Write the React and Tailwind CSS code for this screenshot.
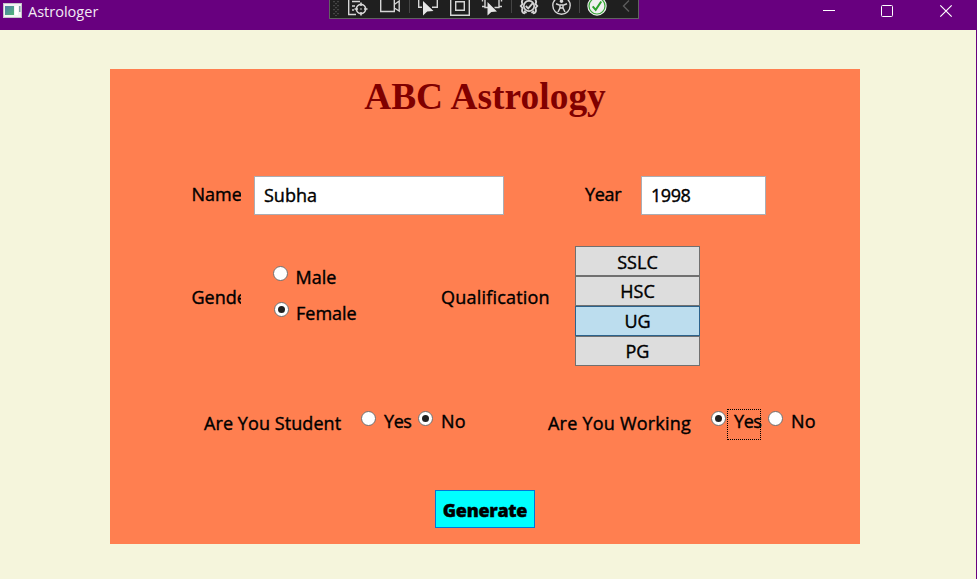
import React from "react";

function Radio({ checked = false, className = "" }) {
  return (
    <span className={`flex h-[15px] w-[15px] shrink-0 items-center justify-center rounded-full border border-[#707070] bg-white ${className}`}>
      {checked && <span className="h-[7px] w-[7px] rounded-full bg-[#212121]" />}
    </span>
  );
}

function Text({ children, className = "" }) {
  return <span className={`block shrink-0 whitespace-nowrap leading-6 ${className}`}>{children}</span>;
}

function DebugToolbar() {
  return (
    <div className="h-[19px] w-[310px] shrink-0 border border-t-0 border-[#626262] bg-[#1f1f1f]">
      <svg className="block" width="308" height="18" viewBox="330 0 308 18" fill="none" stroke="#d6d6d6" strokeWidth="1.4">
        <g stroke="#5a5a5a" strokeWidth="1.3" strokeDasharray="1.3 2.7">
          <path d="M334 1V17M338 1V17" />
          <path d="M336 3V16" />
        </g>
        <path d="M348.7 0V14.5H356M352 1.5H360M352 6H355M352 10H354" />
        <circle cx="361" cy="9" r="4.6" strokeWidth="1.7" />
        <path d="M361 2.5V6M361 12V15.5M354.5 9H358M364 9H367.5" strokeWidth="1.6" />
        <circle cx="361" cy="9" r="0.8" fill="#d6d6d6" stroke="none" />
        <path d="M380.7 0V11.5H394.3V0M394.3 4.5L399.2 1V11L394.3 8" />
        <path d="M409.5 0V13M511.5 0V13M579.5 0V13" stroke="#454545" strokeWidth="1" />
        <path d="M418.7 0V7.3H422M437.3 0V7.3H432" />
        <path d="M423 1V15.5L427.2 11.5L433.5 11Z" fill="#e6e6e6" stroke="none" />
        <path d="M450.7 0V15.3H469.3V0M455.7 1.7H464.3V10.3H455.7Z" />
        <path d="M482.5 0V1.5M485 0V7.5H488M482 6.5H485M499 0V7.5H494.5M501.5 0V1.5M499 6.5H502" />
        <path d="M487.5 2V15.5L491.3 12L497 11.5Z" fill="#e6e6e6" stroke="none" />
        <path d="M523 0Q521 1 522.5 4L520.8 6L522.5 8Q521 13 525 13.3M535 0Q537 1 535.5 4L537.2 6L535.5 8Q537 13 533 13.3" strokeWidth="1.9" />
        <circle cx="529" cy="6" r="5.2" strokeWidth="1.7" />
        <path d="M525.8 6L528.2 8.4L532.8 3.2M524 11L526.5 13M534 11L531.5 13" strokeWidth="1.8" />
        <circle cx="561.5" cy="5.5" r="8.7" />
        <circle cx="561.5" cy="1.2" r="1.7" fill="#d6d6d6" stroke="none" />
        <path d="M556 3.8L560 5.3V8L558 12M567 3.8L563 5.3V8L565 12M560 5H563M560.5 8H562.5" strokeWidth="1.5" />
        <circle cx="597" cy="6" r="9.7" fill="#f0f0f0" stroke="none" />
        <circle cx="597" cy="6" r="8" stroke="#36a536" strokeWidth="1.2" />
        <path d="M592.7 6.3L595.7 9.8L601.2 1.5" stroke="#2ca02c" strokeWidth="2" />
        <path d="M629 0.5L623.5 6L629 11.5" stroke="#5c5c5c" />
      </svg>
    </div>
  );
}

function TitleBar() {
  return (
    <header className="flex h-[30px] bg-[#68007f]">
      <div className="flex w-[329px] shrink-0 items-start pl-[3px] pt-[3px]">
        <svg width="19" height="16" viewBox="0 0 19 16" className="shrink-0">
          <defs>
            <linearGradient id="pane" x1="0" y1="0" x2="1" y2="1">
              <stop offset="0" stopColor="#4d7fa8" />
              <stop offset="1" stopColor="#52b577" />
            </linearGradient>
          </defs>
          <rect x="0.5" y="0.5" width="18" height="14" fill="#f3f3f3" stroke="#c5c5ca" />
          <rect x="2" y="3" width="9" height="9" fill="url(#pane)" />
          <rect x="12" y="3" width="3" height="9" fill="#fff" />
          <rect x="16" y="3" width="1.5" height="6" fill="#7fa3a6" />
        </svg>
        <span className="ml-[6px] text-[14.5px] leading-[18px] tracking-[0.01px] text-[#f2eaf4]">Astrologer</span>
      </div>
      <DebugToolbar />
      <svg className="ml-[183px] mt-[4px] block shrink-0" width="132" height="15" viewBox="822 4 132 15" fill="none" stroke="#fff">
        <path d="M823 10.5H835" />
        <rect x="881.5" y="5.5" width="11" height="11" rx="1" />
        <path d="M940.3 5.3L951.7 16.7M951.7 5.3L940.3 16.7" strokeWidth="1.2" />
      </svg>
    </header>
  );
}

function Level({ children, selected = false, className = "" }) {
  return (
    <div
      className={`flex h-[30px] items-center justify-center border ${className} ${
        selected ? "border-[#2c628b] bg-[#bcddee]" : "border-[#707070] bg-[#dddddd]"
      }`}
    >
      {children}
    </div>
  );
}

export default function App() {
  return (
    <div className="h-[579px] w-[977px] overflow-hidden bg-[#f5f5dc] font-['Open_Sans','Noto_Sans',sans-serif]">
      <TitleBar />
      <div className="h-[549px] border-r border-[#68007f] pl-[110px] pt-[39px]">
        <main className="flex h-[475px] w-[750px] flex-col bg-[#ff7f50] text-[18px] text-black [-webkit-text-stroke:0.4px_black]">
          <h1 className="h-[107px] pt-[6px] text-center font-['Liberation_Serif',serif] text-[37.33px] font-bold leading-[44px] tracking-[0.06px] text-[#800000] [-webkit-text-stroke:0px]">
            ABC Astrology
          </h1>

          <div className="flex h-[70px] items-start">
            <Text className="ml-[81px] mt-[6px] w-[50px] overflow-hidden pl-[0.5px]">Name</Text>
            <div className="ml-[13px] h-[39px] w-[250px] border border-[#abadb3] bg-white pl-[9px] pt-[6px]">
              <Text>Subha</Text>
            </div>
            <Text className="ml-[81px] mt-[6px] w-[56px] tracking-[-0.3px]">Year</Text>
            <div className="h-[39px] w-[125px] border border-[#abadb3] bg-white pl-[9px] pt-[6px]">
              <Text className="tracking-[-0.45px]">1998</Text>
            </div>
          </div>

          <div className="flex h-[154px] items-start">
            <Text className="ml-[81px] mt-[39px] w-[50px] overflow-hidden pl-[0.5px]">Gende</Text>
            <div className="ml-[32px] mt-[20px] flex w-[168px] flex-col">
              <div className="-mt-px flex h-9 items-start">
                <Radio className="mt-px" />
                <Text className="ml-[7.5px]">Male</Text>
              </div>
              <div className="flex h-9 items-start pl-px">
                <Radio checked className="mt-px" />
                <Text className="ml-[7px]">Female</Text>
              </div>
            </div>
            <Text className="mt-[39px] w-[134px] tracking-[0.2px]">Qualification</Text>
            <div className="h-[120px] w-[125px] shrink-0">
              <Level className="pt-[2px]">SSLC</Level>
              <Level>HSC</Level>
              <Level selected>UG</Level>
              <Level>PG</Level>
            </div>
          </div>

          <div className="flex h-[90px] items-start">
            <Text className="ml-[94px] mt-[11px] w-[157px] tracking-[0.08px]">Are You Student</Text>
            <Radio className="mt-[11px]" />
            <Text className="ml-[8px] mt-[9px] w-[34px] tracking-[-0.4px]">Yes</Text>
            <Radio checked className="mt-[11px]" />
            <Text className="ml-[8px] mt-[9px] w-[107px] tracking-[0.3px]">No</Text>
            <Text className="mt-[11px] w-[163px] tracking-[0.22px]">Are You Working</Text>
            <Radio checked className="mt-[11px]" />
            <div className="ml-px mt-[9px] h-[31px] w-[34px] shrink-0 border border-dotted border-black pl-[6px]">
              <Text className="-mt-px tracking-[-0.4px]">Yes</Text>
            </div>
            <Radio className="ml-[7px] mt-[11px]" />
            <Text className="ml-[8px] mt-[9px] tracking-[0.3px]">No</Text>
          </div>

          <button className="ml-[325px] h-[38px] w-[100px] border border-[#0078d7] bg-[#00ffff] pt-px text-[18px] font-extrabold leading-6 tracking-[-0.3px]">
            Generate
          </button>
        </main>
      </div>
    </div>
  );
}
